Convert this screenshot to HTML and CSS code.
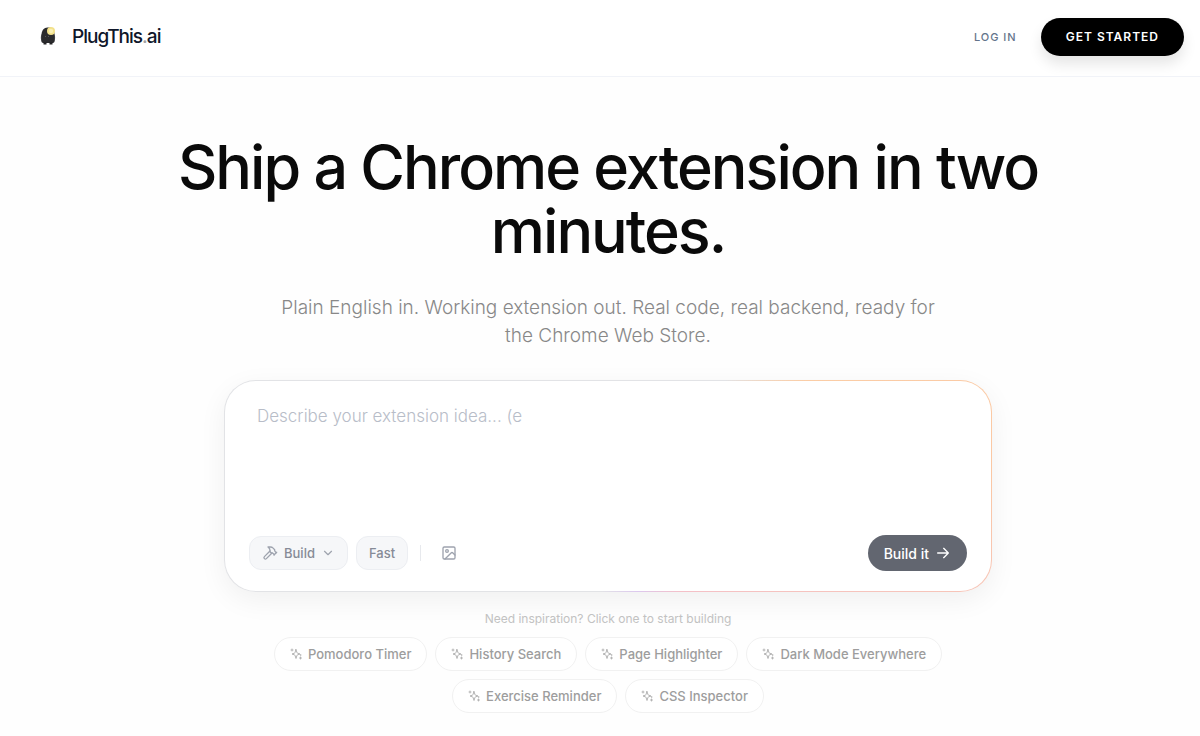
FILE: index.html
```html
<!DOCTYPE html>
<html lang="en">
<head>
	<meta charset="utf-8">
	<title>PlugThis.ai</title>
	<meta name="viewport" content="width=device-width, initial-scale=1">
	<link rel="stylesheet" href="styles.css">
</head>
<body>
	<!-- shared icons -->
	<svg class="sprite" aria-hidden="true">
		<symbol id="sparkles" viewBox="0 0 24 24">
			<path d="M12 3l1.900 6.200a1.500 1.500 0 0 0 .900.900L20 12l-5.200 1.900a1.500 1.500 0 0 0-.900.900L12 21l-1.900-6.200a1.500 1.500 0 0 0-.900-.900L4 12l5.200-1.900a1.500 1.500 0 0 0 .900-.900z"/>
			<path d="M4 2v4M2 4h4M21 18v4M19 20h4"/>
			<circle cx="21" cy="14" r=".5"/>
		</symbol>
	</svg>

	<header class="header">
		<a class="logo" href="#">
			<svg class="logo-mark" viewBox="0 0 16 20" aria-hidden="true">
				<path d="M1.500 8C1.500 3.500 4 .500 7.500.500H10c3 0 4.500 3 4.500 7.500v6c0 1.300-.6 2-1.700 2H3.200c-1.200 0-1.700-.7-1.700-2z" fill="#2b2b2d"/>
				<path d="M2 7C.500 8 .500 13 2 15zM14 7c1.500 1 1.500 6 0 8z" fill="#3d3d40"/>
				<path d="M3.500 15h3v2.500h-3zM9.500 15h3v2.500h-3z" fill="#252527"/>
				<path d="M5 9.500h1M8 9.500h1" stroke="#55555a"/>
				<circle cx="11" cy="4" r="4" fill="#f3e18b"/>
				<circle cx="11" cy="4" r="2.200" fill="#faf0b4"/>
			</svg>
			<span class="logo-text">PlugThis<span class="logo-dot">.</span>ai</span>
		</a>
		<nav class="nav">
			<a class="login" href="#">LOG IN</a>
			<a class="get-started" href="#">GET STARTED</a>
		</nav>
	</header>

	<main class="main">
		<h1 class="title">Ship a Chrome extension in two minutes.</h1>
		<p class="subtitle">Plain English in. Working extension out. Real code, real backend, ready for the Chrome Web Store.</p>

		<form class="prompt">
			<textarea class="idea" aria-label="Extension idea" placeholder="Describe your extension idea... (e"></textarea>
			<div class="toolbar">
				<button type="button" class="tool">
					<svg class="icon" viewBox="0 0 24 24" aria-hidden="true">
						<path d="m15 12-8.400 8.400a1 1 0 0 1-3-3L12 9"/>
						<path d="m18 15 4-4"/>
						<path d="m21.500 11.500-1.900-1.900A2 2 0 0 1 19 8.200V7l-2.300-2.300a6 6 0 0 0-4.200-1.700H9l.9.800A6.200 6.200 0 0 1 12 8.400V10l2 2h1.200a2 2 0 0 1 1.400.6l1.900 1.900"/>
					</svg>
					Build
					<svg class="icon chevron" viewBox="0 0 24 24" aria-hidden="true"><path d="m6 9 6 6 6-6"/></svg>
				</button>
				<button type="button" class="tool">Fast</button>
				<span class="divider"></span>
				<button type="button" class="attach" aria-label="Add image">
					<svg class="icon" viewBox="0 0 24 24" aria-hidden="true">
						<rect x="3" y="3" width="18" height="18" rx="2"/>
						<circle cx="9" cy="9" r="2"/>
						<path d="m21 15-3.100-3.100a2 2 0 0 0-2.800 0L6 21"/>
					</svg>
				</button>
				<button type="submit" class="build">
					Build it
					<svg class="icon" viewBox="0 0 24 24" aria-hidden="true"><path d="M4 12h16M13 5l7 7-7 7"/></svg>
				</button>
			</div>
		</form>

		<p class="hint">Need inspiration? Click one to start building</p>
		<div class="ideas">
			<button class="chip"><svg class="spark" aria-hidden="true"><use href="#sparkles"/></svg>Pomodoro Timer</button>
			<button class="chip"><svg class="spark" aria-hidden="true"><use href="#sparkles"/></svg>History Search</button>
			<button class="chip"><svg class="spark" aria-hidden="true"><use href="#sparkles"/></svg>Page Highlighter</button>
			<button class="chip"><svg class="spark" aria-hidden="true"><use href="#sparkles"/></svg>Dark Mode Everywhere</button>
			<button class="chip"><svg class="spark" aria-hidden="true"><use href="#sparkles"/></svg>Exercise Reminder</button>
			<button class="chip"><svg class="spark" aria-hidden="true"><use href="#sparkles"/></svg>CSS Inspector</button>
		</div>
	</main>
</body>
</html>
```
FILE: styles.css
```css
* {
	box-sizing: border-box;
}

body {
	margin: 0;
	background-color: #fefefe;
	font-family: Inter, "Liberation Sans", sans-serif;
	color: #0a0a0a;
}

a {
	text-decoration: none;
}

button,
textarea {
	font-family: inherit;
}

button {
	cursor: pointer;
}

.sprite {
	display: none;
}

/* Header */
.header {
	display: flex;
	align-items: center;
	justify-content: space-between;
	padding: 18px 16px 20px 40px;
	border-bottom: 1px solid #f1f3f8;
	background-color: #fff;
}
.logo {
	display: flex;
	align-items: center;
	gap: 16px;
	color: #0f172a;
}
.logo-mark {
	width: 16px;
	height: 20px;
}
.logo-text {
	font-size: 19px;
	line-height: 28px;
	font-weight: 500;
	letter-spacing: -1px;
}
.logo-dot {
	color: #a3a3a3;
}
.nav {
	display: flex;
	align-items: center;
	gap: 24px;
}
.login {
	font-size: 11px;
	font-weight: 500;
	letter-spacing: 1px;
	color: #64748b;
}
.get-started {
	padding: 0 25px;
	border-radius: 19px;
	background-color: #000;
	color: #fff;
	font-size: 12px;
	line-height: 38px;
	font-weight: 600;
	letter-spacing: 1px;
	box-shadow: 0 8px 14px rgba(0, 0, 0, .1);
}

/* Hero */
.main {
	display: flex;
	flex-direction: column;
	align-items: center;
	padding: 58px 0 24px 16px;
	text-align: center;
}
.title {
	max-width: 896px;
	margin: 0;
	font-size: 61px;
	line-height: 64px;
	font-weight: 500;
	letter-spacing: -2px;
}
.subtitle {
	max-width: 672px;
	margin: 31px 0 30px;
	font-size: 19px;
	line-height: 28px;
	font-weight: 300;
	color: #888;
}

/* Prompt box, the coloured part of the border runs round the right side */
.prompt {
	display: flex;
	flex-direction: column;
	width: 100%;
	max-width: 768px;
	height: 212px;
	padding: 20px 24px;
	border: 1px solid transparent;
	border-radius: 32px;
	background:
		linear-gradient(#fff, #fff) padding-box,
		conic-gradient(#e2e3e6 48deg, #fbcda6 62deg, #fbc8a4 88deg, #f6c4bc 110deg, #f4c0c8 145deg, #dcc8ee 164deg, #e2e3e6 184deg) border-box;
	box-shadow: 0 8px 28px rgba(0, 0, 0, .06);
}
.idea {
	flex: 1;
	width: 100%;
	padding: 0 8px;
	border: 0;
	outline: 0;
	background: transparent;
	resize: none;
	font-size: 17px;
	line-height: 30px;
	font-weight: 300;
}
.idea::placeholder {
	color: #b8bdc8;
}
.toolbar {
	display: flex;
	align-items: center;
	gap: 8px;
}
.icon {
	width: 16px;
	height: 16px;
	fill: none;
	stroke: currentColor;
	stroke-width: 2;
	stroke-linecap: round;
	stroke-linejoin: round;
}
.tool {
	display: flex;
	align-items: center;
	gap: 6px;
	height: 34px;
	padding: 0 12px;
	border: 1px solid #eceef2;
	border-radius: 12px;
	background-color: #f6f7f9;
	color: #868b97;
	font-size: 13px;
	font-weight: 500;
}
.tool .icon {
	color: #9ea3ae;
}
.tool .chevron {
	width: 14px;
	height: 14px;
}
.divider {
	width: 1px;
	height: 16px;
	margin: 0 4px;
	background-color: #e7e9ed;
}
.attach {
	display: flex;
	padding: 8px;
	border: 0;
	background: none;
	color: #9ea3ae;
}
.build {
	display: flex;
	align-items: center;
	gap: 6px;
	height: 36px;
	margin-left: auto;
	padding: 0 16px;
	border: 0;
	border-radius: 18px;
	background-color: #626670;
	color: #fff;
	font-size: 14px;
	font-weight: 500;
}

/* Suggestions */
.hint {
	margin: 18px 0 9px;
	font-size: 12px;
	line-height: 18px;
	color: #c2c2c2;
}
.ideas {
	display: flex;
	flex-wrap: wrap;
	justify-content: center;
	gap: 8px;
	max-width: 688px;
}
.chip {
	display: flex;
	align-items: center;
	gap: 6px;
	height: 34px;
	padding: 0 15px;
	border: 1px solid #f1f1f1;
	border-radius: 17px;
	background-color: #fff;
	color: #9d9d9d;
	font-size: 13px;
	font-weight: 500;
}
.spark {
	width: 12px;
	height: 12px;
	fill: none;
	stroke: #b4b4b4;
	stroke-width: 2;
	stroke-linecap: round;
	stroke-linejoin: round;
}
```
